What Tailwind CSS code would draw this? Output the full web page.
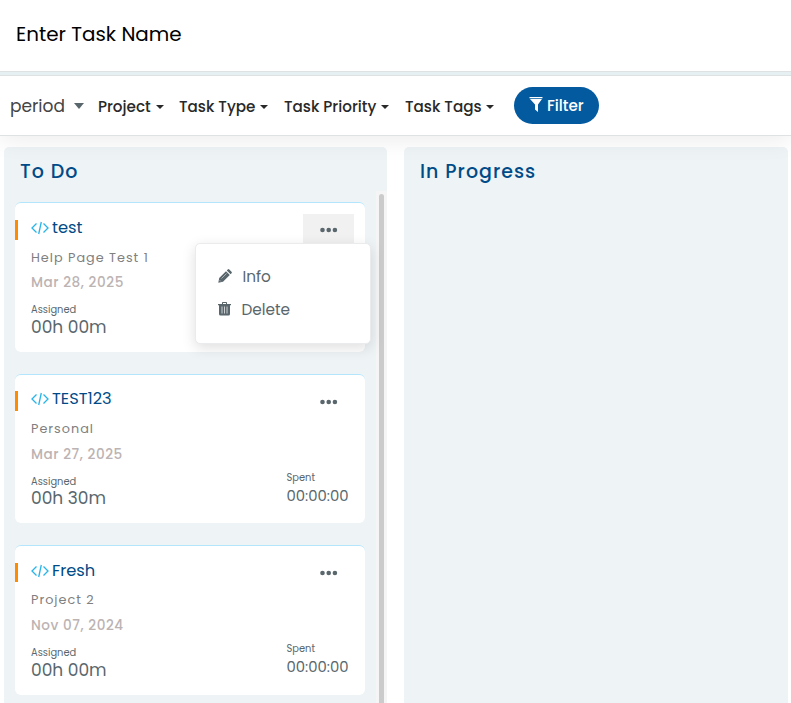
<!DOCTYPE html>
<html lang="en"><head><meta charset="utf-8"><title>Tasks</title>
<script src="https://cdn.jsdelivr.net/npm/@tailwindcss/browser@4"></script></head>
<body class="w-[791px] h-[703px] overflow-hidden bg-white font-['Poppins','Inter',sans-serif] text-[#59676d] leading-none whitespace-nowrap">
<svg class="hidden"><defs>
<symbol id="code" viewBox="0 0 18 14"><path d="M5.500 2.500 1 7l4.500 4.500M12.500 2.500 17 7l-4.500 4.500M10.300 1 7.700 13" fill="none" stroke="#27b4ea" stroke-width="1.300"/></symbol>
<symbol id="dots" viewBox="0 0 18 6"><circle cx="2.500" cy="3" r="2.300"/><circle cx="8.700" cy="3" r="2.300"/><circle cx="14.900" cy="3" r="2.300"/></symbol>
</defs></svg>
<header class="relative z-20 bg-white h-[72px] border-b border-[#dee2e2] flex items-center pl-4 pb-[2px] text-[19.900px] text-black">Enter Task Name</header>
<div class="relative z-20 h-[3px] bg-[#e6eff1]"></div>
<nav class="relative z-10 h-[61px] border-y border-[#dee2e2] bg-white shadow-[0_4px_24px_rgba(0,0,0,0.08)] flex items-center text-[15.200px] font-medium text-[#292929]">
<span class="ml-[10px] w-[54px] pt-px text-[17px] font-normal text-[#444]">period</span>
<span class="ml-[10px] border-x-[5px] border-t-[6px] border-x-transparent border-t-[#59676d]"></span>
<span class="ml-[14px] w-[53px] pt-[2px]">Project</span>
<span class="ml-[5px] mt-[2px] border-x-4 border-t-4 border-x-transparent border-t-[#292929]"></span>
<span class="ml-[15px] w-[77px] pt-[2px]">Task Type</span>
<span class="ml-1 mt-[2px] border-x-4 border-t-4 border-x-transparent border-t-[#292929]"></span>
<span class="ml-4 w-[93px] pt-[2px]">Task Priority</span>
<span class="ml-1 mt-[2px] border-x-4 border-t-4 border-x-transparent border-t-[#292929]"></span>
<span class="ml-4 w-[77px] pt-[2px]">Task Tags</span>
<span class="ml-1 mt-[2px] border-x-4 border-t-4 border-x-transparent border-t-[#292929]"></span>
<button class="ml-5 w-[85px] h-[37px] rounded-full bg-[#035a9f] text-white flex items-center pl-[15px]"><svg class="w-[14px] h-4 mr-1 mb-[3px]" viewBox="0 0 14 16" fill="white"><path d="M.5 1h13v1.200H.5zM1 3h12l-4 5.500V16l-3-2.500v-5z"/></svg>Filter</button>
</nav>
<main class="flex gap-[17px] pt-[11px] pl-1">
<section class="relative w-[383px] h-[556px] bg-[#eef3f6] rounded-t-[5px] flex">
<div class="w-[361px] pl-[11px]">
<h2 class="h-[55px] pt-[15px] pl-[5px] text-[19px] tracking-[1px] font-medium text-[#004b87]">To Do</h2>
<div class="flex flex-col">
<article class="relative h-[150px] mb-[22px] rounded-[6px] border-t border-[#b3e5fc] bg-white pl-4">
<i class="absolute left-0 top-[17px] w-[3px] h-5 bg-[#ff8c00]"></i>
<div class="absolute right-[11px] top-[11px] w-[51px] h-[30px] bg-[#f1f1f1] pt-[13px] pl-[17px]"><svg class="w-[18px] h-[6px] fill-[#59676d]"><use href="#dots"/></svg></div>
<h3 class="flex items-center h-5 mt-[15px] text-[16.300px] text-[#004b87]"><svg class="w-[18px] h-[14px] mr-[3px] mb-px"><use href="#code"/></svg>test</h3>
<p class="mt-[14px] text-[12.800px] tracking-[1px] text-[#808080]">Help Page Test 1</p>
<p class="mt-[11px] text-[13.600px] tracking-[.56px] font-medium text-[#bcb3b3]">Mar 28, 2025</p>
<div class="mt-4 text-[9.900px]">Assigned<div class="mt-1 text-[17px]">00h 00m</div></div>
</article>
<article class="relative h-[149px] mb-[22px] rounded-[6px] border-t border-[#b3e5fc] bg-white pl-4">
<i class="absolute left-0 top-4 w-[3px] h-5 bg-[#ff8c00]"></i>
<svg class="absolute right-[27px] top-[24px] w-[18px] h-[6px] fill-[#59676d]"><use href="#dots"/></svg>
<h3 class="flex items-center h-5 mt-[14px] text-[16.300px] text-[#004b87]"><svg class="w-[18px] h-[14px] mr-[3px] mb-px"><use href="#code"/></svg>TEST123</h3>
<p class="mt-[14px] text-[12.800px] tracking-[1px] text-[#808080]">Personal</p>
<p class="mt-[12px] text-[13.600px] tracking-[.56px] font-medium text-[#bcb3b3]">Mar 27, 2025</p>
<div class="flex justify-between pr-[15px]"><div class="mt-4 text-[9.900px]">Assigned<div class="mt-[3px] text-[17px]">00h 30m</div></div>
<div class="mt-[12px] text-[9.900px]">Spent<div class="mt-[6px] w-[63.500px] text-[14.800px]">00:00:00</div></div></div>
</article>
<article class="relative h-[150px] rounded-[6px] border-t border-[#b3e5fc] bg-white pl-4">
<i class="absolute left-0 top-[17px] w-[3px] h-[19px] bg-[#ff8c00]"></i>
<svg class="absolute right-[27px] top-[24px] w-[18px] h-[6px] fill-[#59676d]"><use href="#dots"/></svg>
<h3 class="flex items-center h-5 mt-[15px] text-[16.300px] text-[#004b87]"><svg class="w-[18px] h-[14px] mr-[3px] mb-px"><use href="#code"/></svg>Fresh</h3>
<p class="mt-[13px] text-[12.800px] tracking-[1px] text-[#808080]">Project 2</p>
<p class="mt-[12px] text-[13.600px] tracking-[.56px] font-medium text-[#bcb3b3]">Nov 07, 2024</p>
<div class="flex justify-between pr-[15px]"><div class="mt-4 text-[9.900px]">Assigned<div class="mt-1 text-[17px]">00h 00m</div></div>
<div class="mt-[12px] text-[9.900px]">Spent<div class="mt-[6px] w-[63.500px] text-[14.800px]">00:00:00</div></div></div>
</article>
</div></div>
<div class="ml-[11px] mt-[44px] w-[11px] bg-[#f5f5f5] pt-[3px] pl-[3px]"><div class="w-[5px] h-[530px] rounded-full bg-[#cbcbcb]"></div></div>
<div class="absolute z-20 left-[191px] top-[96px] w-[176px] h-[101px] rounded-[5px] border border-[#e9ebec] bg-white shadow-[0_4px_14px_rgba(0,0,0,0.13)] pt-[23px] pl-[22px] text-[15.300px]">
<div class="flex items-center h-[20px]"><svg class="w-[14px] h-[14px] mr-[10.500px] mb-[2px]" viewBox="0 0 14 14" fill="#59676d"><path d="M1.200 9 8 2.200 11.800 6 5 12.800.3 13.700zM8.800 1.400 9.700.5q.8-.8 1.600 0l2.200 2.200q.8.8 0 1.600l-.9.900z"/><path d="m3.500 9.500 5-5M1.600 11.200l1.200 1.200" stroke="#dfe2e3" stroke-width=".6"/></svg>Info</div>
<div class="flex items-center h-[20px] mt-[13px]"><svg class="w-[13px] h-[14px] mr-[10.500px] mb-[2px]" viewBox="0 0 13 14" fill="#59676d"><path d="M0 2h4V.700Q4 0 4.700 0h3.600Q9 0 9 .7V2h4v1.300h-1V12q0 1.500-1.500 1.500h-8Q1 13.500 1 12V3.300H0zM5 1v1h3V1z" fill-rule="evenodd"/><path d="M4 4.500v7M6.500 4.500v7M9 4.500v7" stroke="#d7dbdd" stroke-width=".9"/></svg>Delete</div>
</div>
</section>
<section class="w-[384px] h-[556px] bg-[#eef3f6] rounded-t-[5px]"><h2 class="pt-[15px] pl-4 text-[19px] tracking-[1px] font-medium text-[#004b87]">In Progress</h2></section>
</main>
</body></html>
